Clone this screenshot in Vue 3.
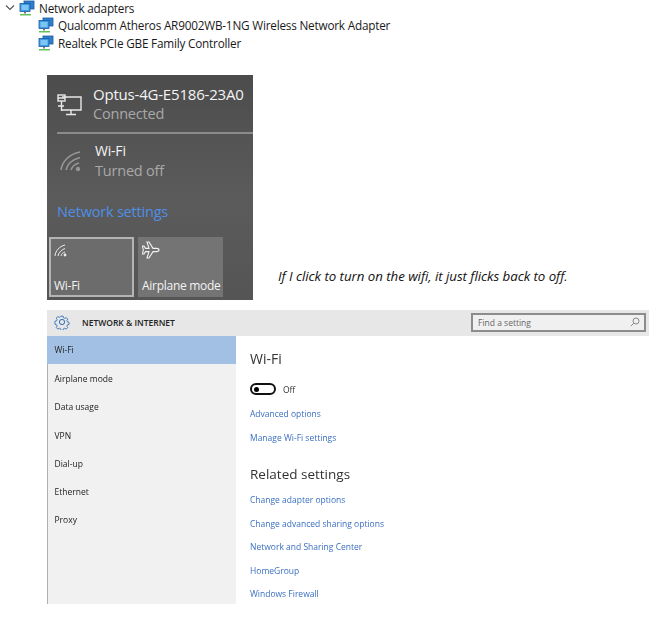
<script setup>
const adapters = ['Qualcomm Atheros AR9002WB-1NG Wireless Network Adapter', 'Realtek PCIe GBE Family Controller']
const nav = ['Wi-Fi', 'Airplane mode', 'Data usage', 'VPN', 'Dial-up', 'Ethernet', 'Proxy']
const related = ['Change adapter options', 'Change advanced sharing options', 'Network and Sharing Center', 'HomeGroup', 'Windows Firewall']
</script>

<template>
  <div class="page">
    <section class="tree">
      <div class="tree-row root">
        <svg class="chev" width="10" height="8" viewBox="0 0 10 8"><path d="M1 1.5 5 5.5 9 1.5" fill="none" stroke="#555" stroke-width="1.1"/></svg>
        <svg class="net" width="16" height="16" viewBox="0 0 16 16">
          <rect x="5" y="1" width="10" height="8" fill="#2f7fd0" stroke="#1d5a9c" stroke-width=".8"/>
          <rect x="1" y="3.5" width="10" height="8" fill="#3c9be6" stroke="#1d5a9c" stroke-width=".8"/>
          <rect x="2.5" y="5" width="7" height="5" fill="#7cc6f5"/>
          <path d="M5 12h2v1.5H5z" fill="#777"/>
          <path d="M1 14h11v1.5H1z" fill="#62c25a"/>
        </svg>
        <span>Network adapters</span>
      </div>
      <div v-for="a in adapters" :key="a" class="tree-row child">
        <svg class="net" width="16" height="16" viewBox="0 0 16 16">
          <rect x="5" y="1" width="10" height="8" fill="#2f7fd0" stroke="#1d5a9c" stroke-width=".8"/>
          <rect x="1" y="3.5" width="10" height="8" fill="#3c9be6" stroke="#1d5a9c" stroke-width=".8"/>
          <rect x="2.5" y="5" width="7" height="5" fill="#7cc6f5"/>
          <path d="M5 12h2v1.5H5z" fill="#777"/>
          <path d="M1 14h11v1.5H1z" fill="#62c25a"/>
        </svg>
        <span>{{ a }}</span>
      </div>
    </section>

    <section class="flyout-row">
      <div class="flyout">
        <div class="net-item">
          <svg class="item-icon" width="26" height="24" viewBox="0 0 26 24" fill="none" stroke="#e8e8e8" stroke-width="1.4">
            <path d="M5 5h19v13H5"/>
            <rect x="1" y="3" width="7" height="6" />
            <path d="M1 6h7M4.500 9v10M1 14h6M14 18v4M9 22.500h10"/>
          </svg>
          <div>
            <div class="item-title">Optus-4G-E5186-23A0</div>
            <div class="item-sub">Connected</div>
          </div>
        </div>
        <div class="rule"></div>
        <div class="net-item wifi">
          <svg class="item-icon" width="24" height="22" viewBox="0 0 24 22" fill="none" stroke="#969696" stroke-width="1.6">
            <path d="M2 20C3 12 10 4 21 2M7 20C8 15 12 10 21 7.500M12 20c1-3 4-6 8-7"/>
            <circle cx="19" cy="19" r="2.200" fill="#969696" stroke="none"/>
          </svg>
          <div>
            <div class="item-title small">Wi-Fi</div>
            <div class="item-sub">Turned off</div>
          </div>
        </div>
        <div class="settings-link">Network settings</div>
        <div class="tiles">
          <div class="tile active">
            <svg width="14" height="13" viewBox="0 0 14 13" fill="none" stroke="#eee" stroke-width="1">
              <path d="M1 12C1.500 7 5 2.500 11 1M4 12c.5-3 3-6 7-7.500M7 12c.4-1.800 1.800-3.500 4-4"/>
              <circle cx="11" cy="11" r="1.400" fill="#eee" stroke="none"/>
            </svg>
            <span>Wi-Fi</span>
          </div>
          <div class="tile">
            <svg width="18" height="18" viewBox="0 0 18 18" fill="none" stroke="#f2f2f2" stroke-width="1.100">
              <path d="M17 9c0-1-1-1.600-2.500-1.600H11L7 1H5l2 6.400H3.500L2 5H.5l.8 4-.8 4H2l1.500-2.400H7L5 17h2l4-6.400h3.500C16 10.600 17 10 17 9z"/>
            </svg>
            <span>Airplane mode</span>
          </div>
        </div>
      </div>
      <p class="note">If I click to turn on the wifi, it just flicks back to off.</p>
    </section>

    <section class="settings">
      <header class="bar">
        <svg width="16" height="16" viewBox="0 0 16 16" fill="none" stroke="#2b6cb8" stroke-width="1">
          <circle cx="8" cy="8" r="2.600"/>
          <path d="M6.700 1h2.600l.4 2 1.500.7 1.800-1 1.800 1.900-1 1.700.6 1.500 2 .5v2.500l-2 .5-.6 1.500 1 1.700-1.800 1.900-1.800-1-1.500.7-.4 1.900H6.700l-.4-2-1.500-.6-1.800 1-1.800-1.900 1-1.700-.6-1.500-2-.5V7l2-.5.6-1.500-1-1.700 1.800-1.900 1.800 1 1.500-.7z" transform="translate(1.300 1.300) scale(.84)"/>
        </svg>
        <span class="bar-title">NETWORK &amp; INTERNET</span>
        <div class="search">
          <span>Find a setting</span>
          <svg width="10" height="10" viewBox="0 0 10 10" fill="none" stroke="#8a8a8a" stroke-width="1"><circle cx="6" cy="4" r="3"/><path d="M3.800 6.200.8 9.200"/></svg>
        </div>
      </header>
      <div class="body">
        <nav class="side">
          <div v-for="(n, i) in nav" :key="n" class="nav-item" :class="{ selected: i === 0 }">{{ n }}</div>
        </nav>
        <main class="content">
          <h2 class="first">Wi-Fi</h2>
          <div class="toggle-row">
            <span class="toggle"><i></i></span>
            <span>Off</span>
          </div>
          <a class="link">Advanced options</a>
          <a class="link">Manage Wi-Fi settings</a>
          <h2 class="second">Related settings</h2>
          <a v-for="r in related" :key="r" class="link">{{ r }}</a>
        </main>
      </div>
    </section>
  </div>
</template>

<style>
html, body { margin: 0; background: #fff; }
</style>

<style scoped>
.page { width: 671px; height: 617px; overflow: hidden; position: relative; background: #fff; font-family: "Open Sans", "Noto Sans", sans-serif; color: #1a1a1a; }
.tree { padding: 0 0 0 5px; height: 75px; box-sizing: border-box; font-size: 11.750px; letter-spacing: -0.2px; }
.tree-row { display: flex; align-items: center; height: 18px; white-space: nowrap; }
.root { height: 16px; }
.chev { margin: 0 4px 0 0; }
.root .net { margin-right: 4px; }
.child { padding-left: 33px; gap: 4px; }

.flyout-row { display: flex; align-items: flex-end; }
.flyout { margin-left: 47px; width: 206px; height: 225px; box-sizing: border-box; background: linear-gradient(#4c4c4c, #5b5b5b 55%, #555); color: #fff; position: relative; flex: none; }
.net-item { display: flex; align-items: center; height: 57px; }
.item-icon { flex: none; }
.net-item:first-child { padding-left: 10px; gap: 10px; box-sizing: border-box; }
.wifi { padding-left: 12px; gap: 12px; height: 53px; }
.item-title { font-size: 15px; line-height: 20px; color: #f4f4f4; white-space: nowrap; letter-spacing: -0.2px; }
.item-title.small { font-size: 14px; }
.item-sub { font-size: 14.500px; line-height: 20px; color: #a9a9a9; white-space: nowrap; letter-spacing: -0.2px; }
.rule { margin-left: 10px; height: 2px; background: #8b8b8b; }
.settings-link { margin: 15px 0 0 10px; font-size: 14.500px; line-height: 20px; color: #4f8fe6; letter-spacing: -0.2px; }
.tiles { position: absolute; left: 2px; top: 162px; display: flex; gap: 4px; }
.tile { width: 85px; height: 60px; box-sizing: border-box; background: #747474; padding: 4px 4px; display: flex; flex-direction: column; justify-content: space-between; font-size: 12px; color: #f3f3f3; white-space: nowrap; letter-spacing: -0.28px; }
.tile.active { border: 2px solid #b4b4b4; padding: 5px 3px 1px; background: #6c6c6c; }
.tile:not(.active) { padding-bottom: 3px; }

.note { margin: 0 0 16px 25px; font-size: 13.300px; font-style: italic; white-space: nowrap; color: #111; letter-spacing: -0.05px; line-height: 16px; }

.settings { margin: 10px 0 0 47px; width: 602px; filter: blur(.3px); }
.bar { height: 26px; background: #e7e7e7; display: flex; align-items: center; padding: 0 0 2px 7px; box-sizing: border-box; }
.bar-title { margin-left: 12px; font-size: 8.500px; font-weight: 600; color: #222; }
.search { margin-left: auto; margin-right: 3px; width: 175px; height: 19px; box-sizing: border-box; border: 2px solid #8c8c8c; background: #f0f0f0; display: flex; align-items: center; justify-content: space-between; padding: 0 4px 0 5px; font-size: 8.500px; color: #666; }
.body { display: flex; height: 268px; }
.side { width: 189px; background: #f1f1f1; border-left: 1px solid #b0b0b0; box-sizing: border-box; flex: none; font-size: 8.500px; color: #222; }
.nav-item { height: 28.300px; line-height: 30px; padding-left: 6.500px; }
.nav-item.selected { background: #a2bfe4; margin-left: -1px; padding-left: 7.500px; line-height: 28px; height: 28px; }
.content { padding-left: 14px; display: flex; flex-direction: column; align-items: flex-start; }
h2 { margin: 0; font-weight: 400; font-size: 14px; color: #333; line-height: 20px; }
.first { margin-top: 13px; }
.toggle-row { display: flex; align-items: center; gap: 7px; margin-top: 13px; height: 14px; font-size: 8.500px; color: #333; }
.toggle { width: 26px; height: 12px; box-sizing: border-box; border: 2px solid #111; border-radius: 6px; display: flex; align-items: center; padding-left: 2px; }
.toggle i { width: 5px; height: 5px; border-radius: 50%; background: #000; }
.link { font-size: 8.500px; color: #3a6fc0; line-height: 12px; margin-top: 11.500px; white-space: nowrap; }
.toggle-row + .link { margin-top: 12px; }
.second { margin-top: 20px; margin-bottom: -1px; font-size: 13.500px; }
</style>
